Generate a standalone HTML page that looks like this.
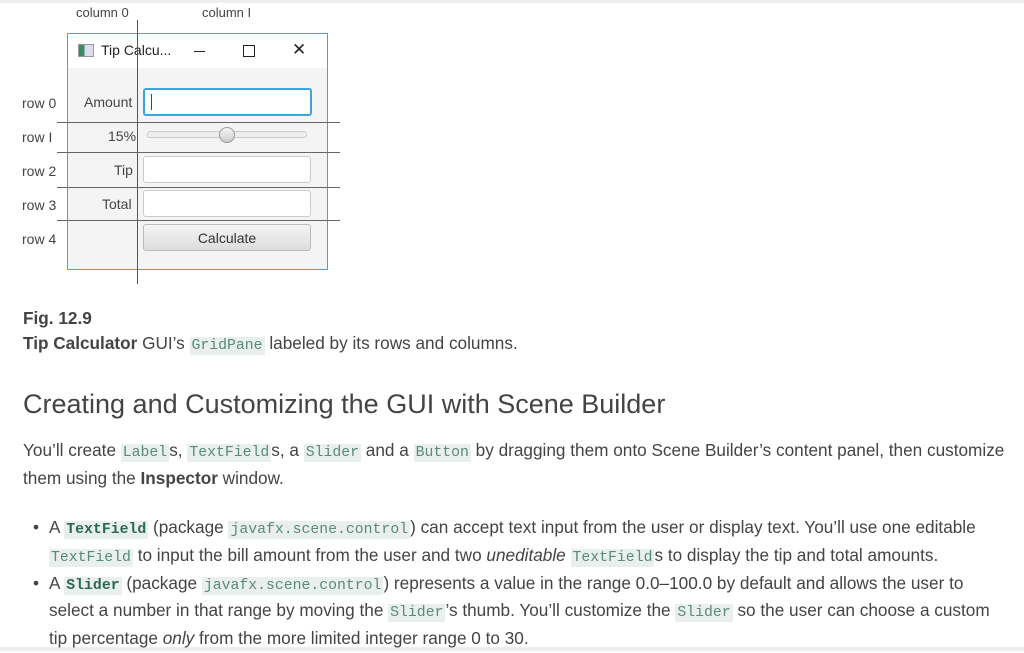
<!DOCTYPE html>
<html><head><style>
body{margin:0;width:1024px;height:651px;background:#fff;position:relative;overflow:hidden;font-family:"Liberation Sans",sans-serif;color:#444}
.a{position:absolute}
.f{font-family:"Liberation Sans",sans-serif;font-size:14px;color:#444}
.fld{position:absolute;left:143px;width:166px;background:#fff;border:1px solid #ccc;border-radius:3px;height:25px}
code{font-family:"Liberation Mono",monospace;font-size:14.8px;line-height:1;background:#e8efec;color:#5a8a7a;padding:1px 2px}
code.b{font-weight:bold;color:#2a6a55}
.p{position:absolute;left:23px;font-size:17.2px;line-height:28px;width:1000px;white-space:nowrap}
ul{margin:0;padding:0;list-style:none}
li{position:relative;padding-left:26px;line-height:27.8px;font-size:17.2px;white-space:nowrap}
li:before{content:"•";position:absolute;left:10px}
</style></head><body>
<div class="a" style="left:0;top:0;width:1024px;height:3px;background:#eee"></div>
<div class="a" style="left:0;top:647px;width:1024px;height:4px;background:#eee"></div>
<div class="a f" style="left:76px;top:5px;font-size:13px">column 0</div>
<div class="a f" style="left:202px;top:5px;font-size:13px">column I</div>
<div class="a" style="left:67px;top:33px;width:259px;height:235px;border:1px solid #5b9bd5;background:#f4f4f4"></div>
<div class="a" style="left:68px;top:34px;width:259px;height:34px;background:#fff"></div>
<div class="a" style="left:78px;top:44px;width:14px;height:11px;border:1px solid #999;background:linear-gradient(90deg,#3a8a6a 40%,#dde 40%)"></div>
<div class="a f" style="left:101px;top:42px;color:#222">Tip Calcu...</div>
<div class="a" style="left:194px;top:51px;width:11px;height:1px;background:#222"></div>
<div class="a" style="left:243px;top:45px;width:10px;height:10px;border:1px solid #222"></div>
<div class="a" style="left:292px;top:40px;font-size:17px;color:#222">✕</div>
<div class="a f" style="left:84px;top:94px">Amount</div>
<div class="a f" style="left:108px;top:128px">15%</div>
<div class="a f" style="left:114px;top:162px">Tip</div>
<div class="a f" style="left:102px;top:196px">Total</div>
<div class="a f" style="left:22px;top:95px">row 0</div>
<div class="a f" style="left:22px;top:129px">row I</div>
<div class="a f" style="left:22px;top:163px">row 2</div>
<div class="a f" style="left:22px;top:197px">row 3</div>
<div class="a f" style="left:22px;top:231px">row 4</div>
<div class="fld" style="top:88px;border:2px solid #3aa6dc;height:24px;width:165px"><div class="a" style="left:6px;top:4px;width:1px;height:16px;background:#444"></div></div>
<div class="a" style="left:147px;top:131px;width:158px;height:5px;border:1px solid #ccc;border-radius:3px;background:#eee"></div>
<div class="a" style="left:219px;top:127px;width:14px;height:14px;border:1px solid #999;border-radius:50%;background:linear-gradient(#f4f4f4,#ccc)"></div>
<div class="fld" style="top:156px"></div>
<div class="fld" style="top:190px"></div>
<div class="fld" style="top:224px;background:linear-gradient(#f4f4f4,#ddd);border-color:#bbb;text-align:center"><span class="f" style="line-height:27px;color:#333">Calculate</span></div>
<div class="a" style="left:137px;top:20px;width:1px;height:264px;background:#555"></div>
<div class="a" style="left:57px;top:122px;width:283px;height:1px;background:#666"></div>
<div class="a" style="left:57px;top:152px;width:283px;height:1px;background:#666"></div>
<div class="a" style="left:57px;top:187px;width:283px;height:1px;background:#666"></div>
<div class="a" style="left:57px;top:220px;width:283px;height:1px;background:#666"></div>
<div class="p" style="top:304px"><b>Fig. 12.9</b></div>
<div class="p" style="top:329px"><b>Tip Calculator</b> GUI’s <code>GridPane</code> labeled by its rows and columns.</div>
<div class="a" style="left:23px;top:389px;font-size:27px">Creating and Customizing the GUI with Scene Builder</div>
<div class="p" style="top:436px">You’ll create <code>Label</code>s, <code>TextField</code>s, a <code>Slider</code> and a <code>Button</code> by dragging them onto Scene Builder’s content panel, then customize<br>them using the <b>Inspector</b> window.</div>
<div class="a" style="left:23px;top:514px;width:1000px"><ul>
<li>A <code class="b">TextField</code> (package <code>javafx.scene.control</code>) can accept text input from the user or display text. You’ll use one editable<br><code>TextField</code> to input the bill amount from the user and two <i>uneditable</i> <code>TextField</code>s to display the tip and total amounts.</li>
<li>A <code class="b">Slider</code> (package <code>javafx.scene.control</code>) represents a value in the range 0.0–100.0 by default and allows the user to<br>select a number in that range by moving the <code>Slider</code>’s thumb. You’ll customize the <code>Slider</code> so the user can choose a custom<br>tip percentage <i>only</i> from the more limited integer range 0 to 30.</li>
</ul></div>
</body></html>
